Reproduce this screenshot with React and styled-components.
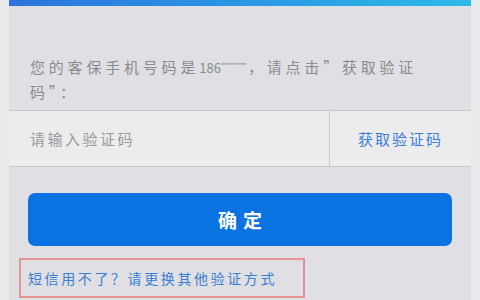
import styled, { createGlobalStyle } from "styled-components";

const Global = createGlobalStyle`
  html, body {
    margin: 0;
    padding: 0;
    background: #e9e9ec;
    font-family: "Noto Sans CJK SC", "Noto Sans", sans-serif;
  }
`;

const Page = styled.div`
  width: 480px;
  height: 300px;
  overflow: hidden;
  display: flex;
  justify-content: center;
`;

const Panel = styled.div`
  width: 462px;
  background: #dfdfe4;
  display: flex;
  flex-direction: column;
`;

const TopBar = styled.div`
  height: 6px;
  background: linear-gradient(90deg, #2b74dc 0%, #2b96e4 50%, #2cbbe9 100%);
`;

const Message = styled.p`
  margin: 0;
  padding: 48px 0 6px 21px;
  font-size: 15px;
  line-height: 24px;
  letter-spacing: 3.8px;
  color: #8b8b8f;
  white-space: nowrap;
`;

const Digits = styled.span`
  font-size: 13px;
  letter-spacing: 0;
`;

const Stars = styled.span`
  font-size: 8px;
  letter-spacing: -0.6px;
  vertical-align: 4px;
  margin-right: 2px;
`;

const InputRow = styled.div`
  height: 55px;
  display: flex;
  background: #ececec;
  border-top: 1px solid #c9c9cd;
  border-bottom: 1px solid #c9c9cd;
`;

const CodeInput = styled.div`
  width: 321px;
  border-right: 1px solid #c9c9cd;
  display: flex;
  align-items: center;
  padding-left: 21px;
  box-sizing: border-box;
  font-size: 15px;
  letter-spacing: 2.5px;
  color: #9a9a9d;
`;

const GetCode = styled.div`
  flex: 1;
  display: flex;
  align-items: center;
  justify-content: center;
  font-size: 15px;
  letter-spacing: 2px;
  color: #3a7ed6;
`;

const Confirm = styled.div`
  margin: 26px 19px 0;
  height: 53px;
  border-radius: 7px;
  background: #0b72e2;
  color: #fff;
  display: flex;
  align-items: center;
  justify-content: center;
  font-size: 19px;
  font-weight: bold;
  letter-spacing: 6px;
  padding-left: 6px;
`;

const AltLink = styled.div`
  margin: 12px 0 0 10px;
  width: 286px;
  height: 40px;
  box-sizing: border-box;
  border: 2px solid #e39494;
  display: flex;
  align-items: center;
  padding-left: 7px;
  font-size: 14px;
  letter-spacing: 2.6px;
  color: #3b7ed2;
`;

export default function App() {
  return (
    <>
      <Global />
      <Page>
        <Panel>
          <TopBar />
          <Message>
            您的客保手机号码是<Digits>186</Digits>
            <Stars>********</Stars>，请点击”获取验证
            <br />
            码”：
          </Message>
          <InputRow>
            <CodeInput>请输入验证码</CodeInput>
            <GetCode>获取验证码</GetCode>
          </InputRow>
          <Confirm>确定</Confirm>
          <AltLink>短信用不了？请更换其他验证方式</AltLink>
        </Panel>
      </Page>
    </>
  );
}
